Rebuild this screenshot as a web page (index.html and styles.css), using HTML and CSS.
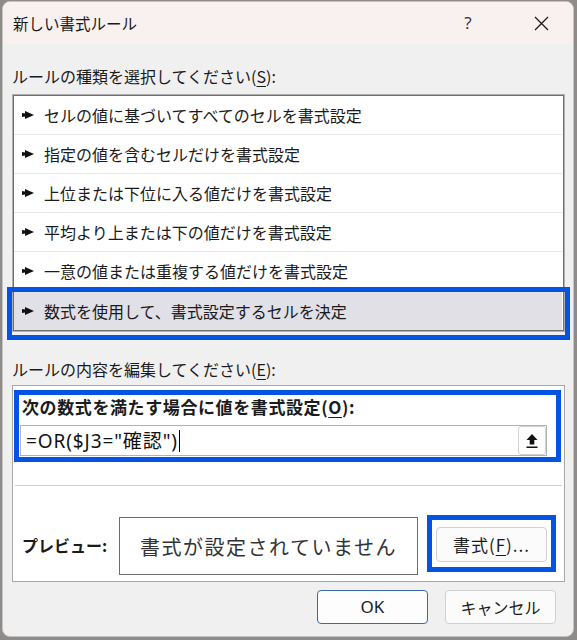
FILE: index.html
```html
<!DOCTYPE html>
<html lang="ja">
<head>
<meta charset="utf-8">
<title>新しい書式ルール</title>
<link rel="stylesheet" href="styles.css">
</head>
<body>
<div class="dialog">
  <div class="titlebar">
    <span class="title">新しい書式ルール</span>
    <span class="help">?</span>
    <span class="close"><svg width="15" height="15" viewBox="0 0 15 15"><path d="M1 1 L14 14 M14 1 L1 14" stroke="#1a1a1a" stroke-width="1.3" fill="none"/></svg></span>
  </div>
  <div class="content">
    <div class="label lbl1">ルールの種類を選択してください(<u>S</u>):</div>
    <div class="list">
      <div class="row"><svg class="ptr" width="12" height="8" viewBox="0 0 12 8"><path d="M0 2 L3 2.5 V0 L12 4 L3 8 V5.5 L0 6 Z" fill="#111"/></svg><span>セルの値に基づいてすべてのセルを書式設定</span></div>
      <div class="row"><svg class="ptr" width="12" height="8" viewBox="0 0 12 8"><path d="M0 2 L3 2.5 V0 L12 4 L3 8 V5.5 L0 6 Z" fill="#111"/></svg><span>指定の値を含むセルだけを書式設定</span></div>
      <div class="row"><svg class="ptr" width="12" height="8" viewBox="0 0 12 8"><path d="M0 2 L3 2.5 V0 L12 4 L3 8 V5.5 L0 6 Z" fill="#111"/></svg><span>上位または下位に入る値だけを書式設定</span></div>
      <div class="row"><svg class="ptr" width="12" height="8" viewBox="0 0 12 8"><path d="M0 2 L3 2.5 V0 L12 4 L3 8 V5.5 L0 6 Z" fill="#111"/></svg><span>平均より上または下の値だけを書式設定</span></div>
      <div class="row"><svg class="ptr" width="12" height="8" viewBox="0 0 12 8"><path d="M0 2 L3 2.5 V0 L12 4 L3 8 V5.5 L0 6 Z" fill="#111"/></svg><span>一意の値または重複する値だけを書式設定</span></div>
      <div class="row sel"><svg class="ptr" width="12" height="8" viewBox="0 0 12 8"><path d="M0 2 L3 2.5 V0 L12 4 L3 8 V5.5 L0 6 Z" fill="#111"/></svg><span>数式を使用して、書式設定するセルを決定</span></div>
      <div class="mark mark-sel"></div>
    </div>
    <div class="label lbl2">ルールの内容を編集してください(<u>E</u>):</div>
    <div class="panel">
      <div class="criteria">
        <div class="bold crit-label">次の数式を満たす場合に値を書式設定(<u>O</u>):</div>
        <div class="input">
          <span class="formula">=OR($J3="確認")</span><span class="caret"></span>
          <span class="collapse"><svg width="12" height="16" viewBox="0 0 12 16"><path d="M6 1 L11.5 7 H8.3 V11.5 H3.7 V7 H0.5 Z" fill="#111"/><rect x="0.5" y="13.5" width="11" height="1.5" fill="#111"/></svg></span>
        </div>
        <div class="mark mark-crit"></div>
      </div>
      <div class="sep"></div>
      <div class="preview-row">
        <div class="bold pv-label">プレビュー:</div>
        <div class="pv-box">書式が設定されていません</div>
        <div class="fmt-wrap">
          <span class="btn fmt">書式(<u>F</u>)...</span>
          <div class="mark mark-fmt"></div>
        </div>
      </div>
    </div>
    <div class="actions">
      <span class="btn ok">OK</span>
      <span class="btn">キャンセル</span>
    </div>
  </div>
</div>
</body>
</html>
```
FILE: styles.css
```css
html, body {
  margin: 0;
  padding: 0;
}
body {
  width: 577px;
  height: 640px;
  overflow: hidden;
  background: #8e8b89;
  font-family: "Noto Sans CJK JP", "Noto Sans", sans-serif;
  color: #1b1b1b;
}
.dialog {
  margin: 1px 0 0 2px;
  width: 572px;
  height: 636px;
  box-sizing: border-box;
  background: #f0f0f0;
  border: 1px solid #c4c4c4;
  border-radius: 8px;
  overflow: hidden;
  display: flex;
  flex-direction: column;
}
.titlebar {
  height: 42px;
  flex: none;
  display: flex;
  align-items: center;
  padding-left: 10px;
  padding-right: 9px;
  background: #f8f1f0;
}
.title {
  font-size: 15.5px;
  line-height: 20px;
  color: #1a1a1a;
}
.help {
  margin-left: auto;
  width: 20px;
  text-align: center;
  font-family: "Open Sans", "Noto Sans", sans-serif;
  font-size: 17px;
  line-height: 20px;
  color: #2a2a2a;
}
.close {
  margin-left: 40px;
  width: 46px;
  height: 20px;
  display: flex;
  align-items: center;
  justify-content: center;
}
.content {
  padding: 0 8px 0 9px;
  display: flex;
  flex-direction: column;
}
.label {
  font-size: 16px;
  line-height: 20px;
}
.lbl1 {
  margin: 22px 0 8px;
}
.lbl2 {
  margin: 27px 0 6px;
}
u {
  text-underline-offset: 3px;
  text-decoration-thickness: 1px;
}
.list {
  position: relative;
  background: #fff;
  border: 1px solid #b0b0b0;
  box-shadow: inset 0 0 0 1px #6f6f6f;
  padding: 1px 2px 1px 1px;
}
.row {
  height: 38px;
  border-bottom: 1px solid #e6e6e6;
  display: flex;
  align-items: center;
  padding-left: 8px;
  font-size: 16px;
  line-height: 20px;
}
.row .ptr {
  margin-right: 10px;
  flex: none;
}
.row.sel {
  height: 39px;
  border-bottom: none;
  background: #e0e0e6;
}
.mark {
  position: absolute;
  box-sizing: border-box;
  border: 5px solid #0453e2;
  pointer-events: none;
}
.mark-sel {
  left: -6px;
  top: 192px;
  width: 563px;
  height: 53px;
}
.panel {
  height: 197px;
  box-sizing: border-box;
  background: #fff;
  border: 1px solid #a8a8a8;
  display: flex;
  flex-direction: column;
}
.criteria {
  position: relative;
  padding: 11px 17px 0 7px;
}
.bold {
  font-weight: 700;
  font-size: 16.5px;
  line-height: 20px;
}
.crit-label {
  padding-left: 2px;
  font-size: 17px;
  letter-spacing: 0.6px;
}
.input {
  margin-top: 8px;
  height: 31px;
  box-sizing: border-box;
  border: 1px solid #b2b2b2;
  display: flex;
  align-items: center;
  padding-left: 5px;
}
.formula {
  font-family: "Noto Sans", "Noto Sans CJK JP", sans-serif;
  font-size: 19px;
  letter-spacing: 0.9px;
  line-height: 22px;
  color: #111;
}
.caret {
  width: 1px;
  height: 22px;
  margin-left: 1px;
  background: #000;
}
.collapse {
  margin-left: auto;
  width: 28px;
  height: 29px;
  box-sizing: border-box;
  border: 1px solid #d2d2d2;
  border-radius: 3px;
  background: #fdfdfd;
  display: flex;
  align-items: center;
  justify-content: center;
}
.mark-crit {
  left: 1px;
  top: 4px;
  width: 547px;
  height: 72px;
}
.sep {
  margin: 29px 2px 0;
  height: 1px;
  background: #d2d2d2;
}
.preview-row {
  display: flex;
  align-items: flex-start;
  padding-left: 9px;
}
.pv-label {
  width: 97px;
  margin-top: 49px;
  font-size: 16px;
}
.pv-box {
  width: 299px;
  height: 58px;
  margin-top: 31px;
  box-sizing: border-box;
  border: 1px solid #6d6d6d;
  display: flex;
  align-items: center;
  justify-content: center;
  font-size: 20px;
  letter-spacing: 1.5px;
  color: #333;
}
.fmt-wrap {
  position: relative;
  margin: 29px 0 0 9px;
  width: 129px;
  height: 57px;
  display: flex;
  align-items: center;
  justify-content: center;
}
.mark-fmt {
  left: 0;
  top: 0;
  width: 129px;
  height: 57px;
}
.btn {
  width: 111px;
  height: 34px;
  box-sizing: border-box;
  border: 1px solid #d0d0d0;
  border-radius: 4px;
  background: #fbfbfb;
  display: flex;
  align-items: center;
  justify-content: center;
  font-size: 16px;
  line-height: 20px;
  color: #1a1a1a;
}
.btn.fmt {
  height: 35px;
  margin-top: 2px;
  font-size: 17px;
  letter-spacing: 1px;
}
.actions {
  margin-top: 8px;
  padding-right: 9px;
  display: flex;
  justify-content: flex-end;
  gap: 17px;
}
.btn.ok {
  border-color: #3c6aa5;
  background: #fdfdfd;
  font-family: "Noto Sans", "Noto Sans CJK JP", sans-serif;
  font-size: 17px;
}
```
